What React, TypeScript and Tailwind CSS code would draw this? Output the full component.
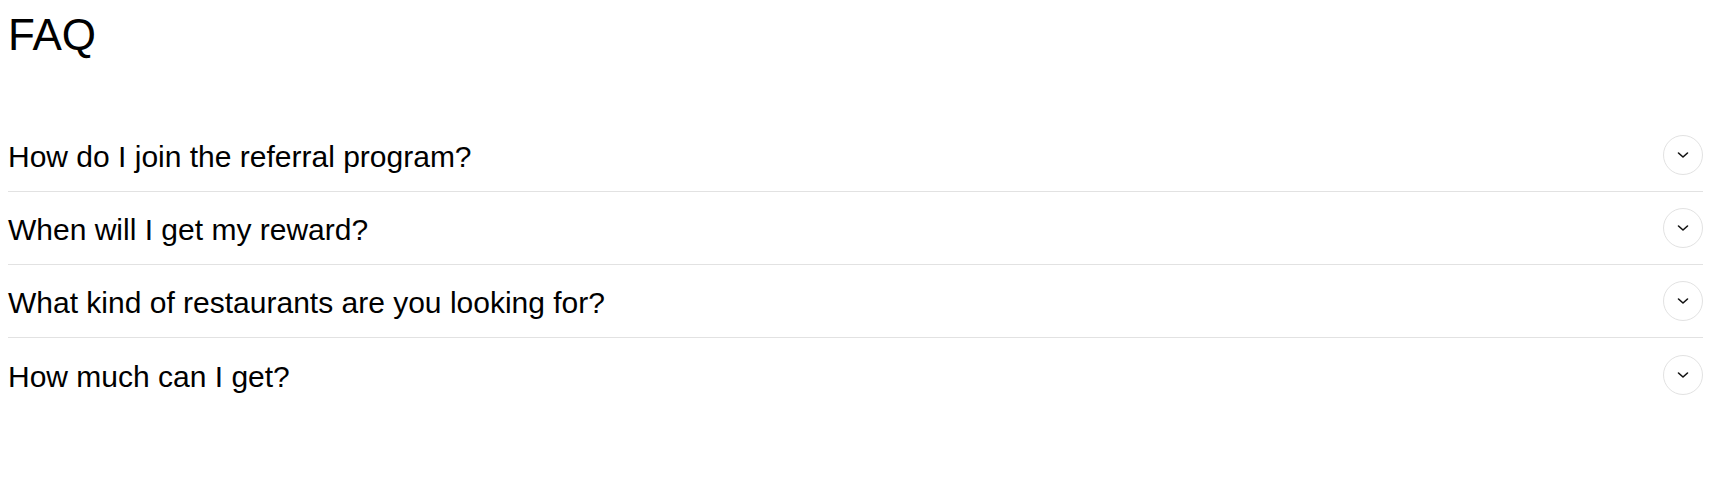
const questions = [
  "How do I join the referral program?",
  "When will I get my reward?",
  "What kind of restaurants are you looking for?",
  "How much can I get?",
];

function Chevron() {
  return (
    <svg width="12" height="8" viewBox="0 0 12 8" fill="none">
      <path d="M1.5 2l4.5 4 4.5-4" stroke="#111" strokeWidth="1.6" strokeLinecap="round" strokeLinejoin="round" />
    </svg>
  );
}

export default function App() {
  return (
    <div className="min-h-[478px] bg-white pl-2 pr-[17px] text-black" style={{ fontFamily: '"Liberation Sans", Arial, sans-serif' }}>
      <h2 className="pt-[13px] text-[44px] leading-none font-normal">FAQ</h2>

      <div className="mt-[62px]">
        {questions.map((q, i) => (
          <div
            key={q}
            className={`flex h-[73px] items-center justify-between ${
              i < questions.length - 1 ? "border-b border-[#e2e2e2]" : ""
            }`}
          >
            <span className="mt-1 text-[30px] leading-none">{q}</span>
            <button className="flex h-10 w-10 items-center justify-center rounded-full border border-[#e2e2e2]">
              <Chevron />
            </button>
          </div>
        ))}
      </div>
    </div>
  );
}
